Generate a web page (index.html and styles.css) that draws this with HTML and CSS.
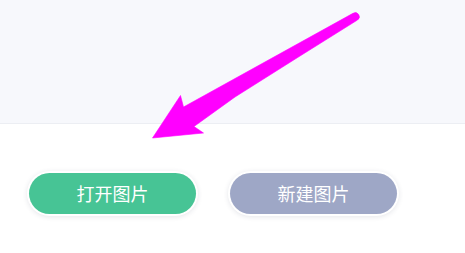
FILE: index.html
```html
<!DOCTYPE html>
<html lang="zh-CN">
<head>
<meta charset="utf-8">
<link rel="stylesheet" href="styles.css">
</head>
<body>
<div class="page">
  <div class="top"></div>
  <div class="actions">
    <button class="btn btn-open">打开图片</button>
    <button class="btn btn-new">新建图片</button>
  </div>
  <svg class="arrow" width="465" height="253" viewBox="0 0 465 253">
    <path d="M353 13.3 A3 3 0 0 1 357.5 20 L300 56 L235 97 L194 126.5 L203.5 133 L152.5 138 L180.5 95.5 L183.5 107 Z" fill="#ff00ff" stroke="#ff00ff" stroke-width="0.6" stroke-linejoin="round"/>
  </svg>
</div>
</body>
</html>
```
FILE: styles.css
```css
* { box-sizing: border-box; }
html, body { margin: 0; padding: 0; background: #ffffff; }
.page {
  position: relative;
  width: 465px;
  height: 253px;
  overflow: hidden;
  font-family: "Noto Sans CJK SC", "Noto Sans", sans-serif;
}
.top {
  height: 124px;
  background: #f7f8fc;
  border-bottom: 1px solid #eceef3;
}
.actions {
  display: flex;
  gap: 34px;
  padding: 49px 0 0 29px;
}
.btn {
  width: 167px;
  height: 41px;
  border: none;
  border-radius: 21px;
  color: #ffffff;
  font-family: "Noto Sans CJK SC", "Noto Sans", sans-serif;
  font-size: 18px;
  line-height: 41px;
  padding: 0;
  box-shadow: 0 0 0 2px #ffffff, 0 1px 5px 2px rgba(40, 50, 80, 0.12);
}
.btn-open { background: #47c495; }
.btn-new { background: #9ea7c6; }
.arrow {
  position: absolute;
  left: 0;
  top: 0;
  pointer-events: none;
}
```
